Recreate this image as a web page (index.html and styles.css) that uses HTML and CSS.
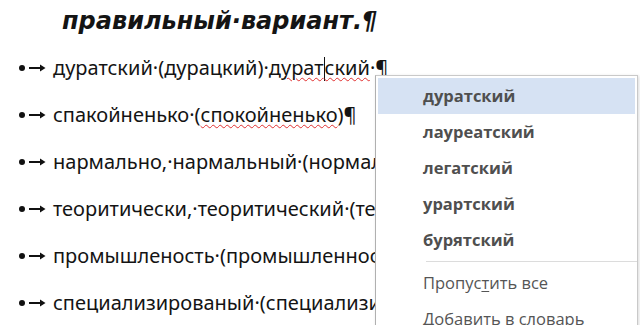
FILE: index.html
```html
<!DOCTYPE html>
<html>
<head>
    <link rel="stylesheet" href="styles.css">
</head>
<body>
    <div class="doc">
        <div class="title">правильный·вариант.¶</div>
        <div class="lines">
            <div class="line"><span class="mark"></span><svg class="tab" width="17" height="8" viewBox="0 0 17 8"><path d="M0 4H12" stroke="#111" stroke-width="2"/><path d="M11 0.5L16.5 4L11 7.5Z" fill="#111"/></svg><span class="text">дуратский·(дурацкий)·<span class="typo">дурат<span class="caret"></span>ский</span>·¶</span></div>
            <div class="line"><span class="mark"></span><svg class="tab" width="17" height="8" viewBox="0 0 17 8"><path d="M0 4H12" stroke="#111" stroke-width="2"/><path d="M11 0.5L16.5 4L11 7.5Z" fill="#111"/></svg><span class="text">спакойненько·(<span class="typo">спокойненько</span>)¶</span></div>
            <div class="line"><span class="mark"></span><svg class="tab" width="17" height="8" viewBox="0 0 17 8"><path d="M0 4H12" stroke="#111" stroke-width="2"/><path d="M11 0.5L16.5 4L11 7.5Z" fill="#111"/></svg><span class="text">нармально,·нармальный·(нормально,·нормальный)¶</span></div>
            <div class="line"><span class="mark"></span><svg class="tab" width="17" height="8" viewBox="0 0 17 8"><path d="M0 4H12" stroke="#111" stroke-width="2"/><path d="M11 0.5L16.5 4L11 7.5Z" fill="#111"/></svg><span class="text">теоритически,·теоритический·(теоретически)¶</span></div>
            <div class="line"><span class="mark"></span><svg class="tab" width="17" height="8" viewBox="0 0 17 8"><path d="M0 4H12" stroke="#111" stroke-width="2"/><path d="M11 0.5L16.5 4L11 7.5Z" fill="#111"/></svg><span class="text">промышленость·(промышленность)¶</span></div>
            <div class="line"><span class="mark"></span><svg class="tab" width="17" height="8" viewBox="0 0 17 8"><path d="M0 4H12" stroke="#111" stroke-width="2"/><path d="M11 0.5L16.5 4L11 7.5Z" fill="#111"/></svg><span class="text">специализированый·(специализированный)¶</span></div>
        </div>
    </div>

    <div class="menu">
        <div class="menu-item suggest active">дуратский</div>
        <div class="menu-item suggest">лауреатский</div>
        <div class="menu-item suggest">легатский</div>
        <div class="menu-item suggest">урартский</div>
        <div class="menu-item suggest">бурятский</div>
        <div class="menu-sep"></div>
        <div class="menu-item">Пропус<u>т</u>ить все</div>
        <div class="menu-item">Добавить в словарь</div>
    </div>
</body>
</html>
```

FILE: styles.css
```css
body {
    margin: 0;
    padding: 0;
    background: #fff;
    color: #141414;
    font-family: 'Noto Sans', 'Liberation Sans', sans-serif;
    width: 640px;
    height: 325px;
    overflow: hidden;
    position: relative;
}
.doc {
    padding-top: 7px;
}
.title {
    font-family: 'DejaVu Sans', sans-serif;
    font-style: italic;
    font-weight: bold;
    font-size: 24px;
    height: 37px;
    line-height: 28px;
    padding-left: 62px;
    white-space: nowrap;
}
.lines {
    display: flex;
    flex-direction: column;
}
.line {
    display: flex;
    align-items: center;
    height: 47px;
    white-space: nowrap;
    font-size: 20px;
}
.mark {
    width: 6px;
    height: 6px;
    border-radius: 50%;
    background: #111;
    margin-left: 19px;
    margin-right: 4px;
}
.tab {
    margin-right: 7px;
}
.typo {
    text-decoration: underline wavy #e03030;
    text-decoration-thickness: 1px;
    text-underline-offset: 2px;
}
.caret {
    display: inline-block;
    width: 1px;
    height: 24px;
    background: #111;
    vertical-align: -6px;
}
.menu {
    position: absolute;
    left: 375px;
    top: 75px;
    width: 261px;
    height: 270px;
    background: #fff;
    border: 1px solid #c9c9c9;
    border-left-color: #b0b0b0;
    box-shadow: 1px 1px 3px rgba(0,0,0,0.15);
    padding-top: 2px;
    font-family: 'Open Sans', 'Noto Sans', sans-serif;
    font-size: 16.5px;
    color: #555;
}
.menu-item {
    height: 36px;
    line-height: 36px;
    padding-left: 45px;
    margin: 0 2px;
}
.suggest {
    font-weight: bold;
    color: #4f4f4f;
}
.active {
    background: #d6e2f3;
}
.menu-sep {
    height: 1px;
    background: #dcdcdc;
    margin: 3px 0 3px 50px;
}
.menu-item u {
    text-underline-offset: 2px;
}
```
